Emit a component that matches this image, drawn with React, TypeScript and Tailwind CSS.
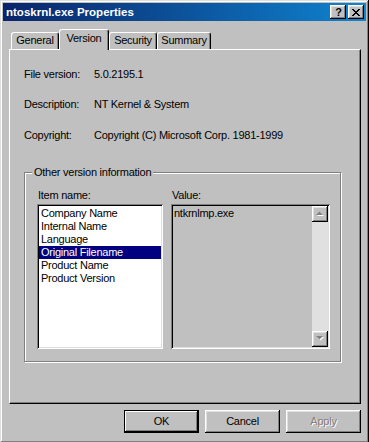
import React from 'react';

const raised =
    'shadow-[inset_-1px_-1px_#000,inset_1px_1px_#fff,inset_-2px_-2px_#808080,inset_2px_2px_#dfdfdf]';
const sunken =
    'shadow-[inset_1px_1px_#808080,inset_-1px_-1px_#fff,inset_2px_2px_#000,inset_-2px_-2px_#dfdfdf]';

const items = ['Company Name', 'Internal Name', 'Language', 'Original Filename', 'Product Name', 'Product Version'];

function Arrow({ up }: { up: boolean }) {
    // disabled scroll arrow: grey triangle with a white drop
    const pts = up ? '0,4 7,4 3.5,0.5' : '0,0 7,0 3.5,3.5';
    return (
        <svg width="9" height="6" viewBox="0 0 9 6">
            <polygon points={pts} transform="translate(1,1)" fill="#fff" />
            <polygon points={pts} fill="#808080" />
        </svg>
    );
}

function ScrollButton({ up }: { up: boolean }) {
    return (
        <div className={`flex h-[16px] w-[16px] items-center justify-center bg-[#c0c0c0] ${raised}`}>
            <Arrow up={up} />
        </div>
    );
}

function Tab({ label, active, width }: { label: string; active?: boolean; width: string }) {
    if (active) {
        return (
            <div
                className={`relative z-10 -mb-[1px] flex h-[21px] ${width} items-start justify-center rounded-t-[3px] border-l border-t border-r border-white border-r-black bg-[#c0c0c0] pt-[2px] shadow-[inset_-1px_0_#808080]`}
            >
                {label}
            </div>
        );
    }
    return (
        <div
            className={`flex h-[17px] ${width} items-start justify-center rounded-t-[3px] border-l border-t border-r border-white border-r-black bg-[#c0c0c0] pt-[1px] shadow-[inset_-1px_0_#808080]`}
        >
            {label}
        </div>
    );
}

export default function App() {
    return (
        <div className="h-[442px] w-[369px] overflow-hidden bg-[#c0c0c0] text-[11px] leading-[13px] tracking-[-0.25px] text-black [font-family:'Liberation_Sans',Arial,sans-serif]">
            <div className="flex h-[443px] w-[369px] flex-col bg-[#c0c0c0] p-[3px] shadow-[inset_-1px_-1px_#000,inset_1px_1px_#dfdfdf,inset_-2px_-2px_#808080,inset_2px_2px_#fff]">
                {/* Title bar */}
                <div className="flex h-[18px] items-center justify-between bg-linear-to-r from-[#0a246a] to-[#1084d0] pl-[3px] pr-[2px]">
                    <span className="text-[11.5px] font-bold tracking-normal text-white">ntoskrnl.exe Properties</span>
                    <div className="flex gap-[2px]">
                        <div className={`flex h-[14px] w-[16px] items-center justify-center bg-[#c0c0c0] pl-[1px] text-[11px] font-bold leading-[11px] ${raised}`}>
                            ?
                        </div>
                        <div className={`flex h-[14px] w-[16px] items-center justify-center bg-[#c0c0c0] ${raised}`}>
                            <svg width="8" height="7" viewBox="0 0 8 7">
                                <path d="M0 0h2v1H0zM6 0h2v1H6zM1 1h2v1H1zM5 1h2v1H5zM2 2h4v1H2zM3 3h2v1H3zM2 4h4v1H2zM1 5h2v1H1zM5 5h2v1H5zM0 6h2v1H0zM6 6h2v1H6z" fill="#000" />
                            </svg>
                        </div>
                    </div>
                </div>

                {/* Tabs */}
                <div className="ml-[8px] mt-[8px] flex h-[20px] items-end">
                    <Tab label="General" width="w-[48px]" />
                    <Tab label="Version" width="w-[50px]" active />
                    <Tab label="Security" width="w-[48px]" />
                    <Tab label="Summary" width="w-[54px]" />
                </div>

                {/* Tab panel */}
                <div className="ml-[6px] h-[355px] w-[352px] border-l border-t border-r border-b border-white border-r-black border-b-black pl-[14px] pt-[18px] shadow-[inset_-1px_-1px_#808080]">
                    <div className="flex h-[13px]">
                        <span className="w-[70px]">File version:</span>
                        <span>5.0.2195.1</span>
                    </div>
                    <div className="mt-[17px] flex h-[13px]">
                        <span className="w-[70px]">Description:</span>
                        <span>NT Kernel &amp; System</span>
                    </div>
                    <div className="mt-[18px] flex h-[13px]">
                        <span className="w-[70px]">Copyright:</span>
                        <span>Copyright (C) Microsoft Corp. 1981-1999</span>
                    </div>

                    {/* Group box */}
                    <div className="relative mt-[30px] h-[190px] w-[317px] border border-[#808080] pl-[12px] pt-[16px] shadow-[inset_1px_1px_#fff,1px_1px_#fff]">
                        <span className="absolute left-[7px] top-[-7px] bg-[#c0c0c0] px-[2px]">Other version information</span>
                        <div className="flex gap-[8px]">
                            <div className="flex flex-col">
                                <span className="mb-[2px] h-[13px] pl-[1px]">Item name:</span>
                                <div className={`h-[145px] w-[126px] bg-white px-[2px] pt-[3px] ${sunken}`}>
                                    {items.map(it => (
                                        <div
                                            key={it}
                                            className={`h-[13px] pl-[2px] ${it === 'Original Filename' ? 'bg-[#000080] text-white' : ''}`}
                                        >
                                            {it}
                                        </div>
                                    ))}
                                </div>
                            </div>
                            <div className="flex flex-col">
                                <span className="mb-[2px] h-[13px] pl-[1px]">Value:</span>
                                <div className={`flex h-[145px] w-[159px] bg-[#c0c0c0] p-[2px] ${sunken}`}>
                                    <div className="flex-1 pl-[1px] pt-[1px]">ntkrnlmp.exe</div>
                                    <div className="flex w-[16px] flex-col">
                                        <ScrollButton up />
                                        <div className="flex-1 bg-[#e0e0e0]" />
                                        <ScrollButton up={false} />
                                    </div>
                                </div>
                            </div>
                        </div>
                    </div>
                </div>

                {/* Buttons */}
                <div className="mt-[6px] flex justify-end gap-[6px] pr-[5px]">
                    <div className={`flex h-[23px] w-[75px] items-center justify-center border border-black bg-[#c0c0c0] shadow-[inset_-1px_-1px_#000,inset_1px_1px_#fff,inset_-2px_-2px_#808080]`}>
                        OK
                    </div>
                    <div className={`flex h-[23px] w-[75px] items-center justify-center bg-[#c0c0c0] ${raised}`}>Cancel</div>
                    <div className={`flex h-[23px] w-[75px] items-center justify-center bg-[#c0c0c0] text-[#808080] [text-shadow:1px_1px_#fff] ${raised}`}>
                        Apply
                    </div>
                </div>
            </div>
        </div>
    );
}
